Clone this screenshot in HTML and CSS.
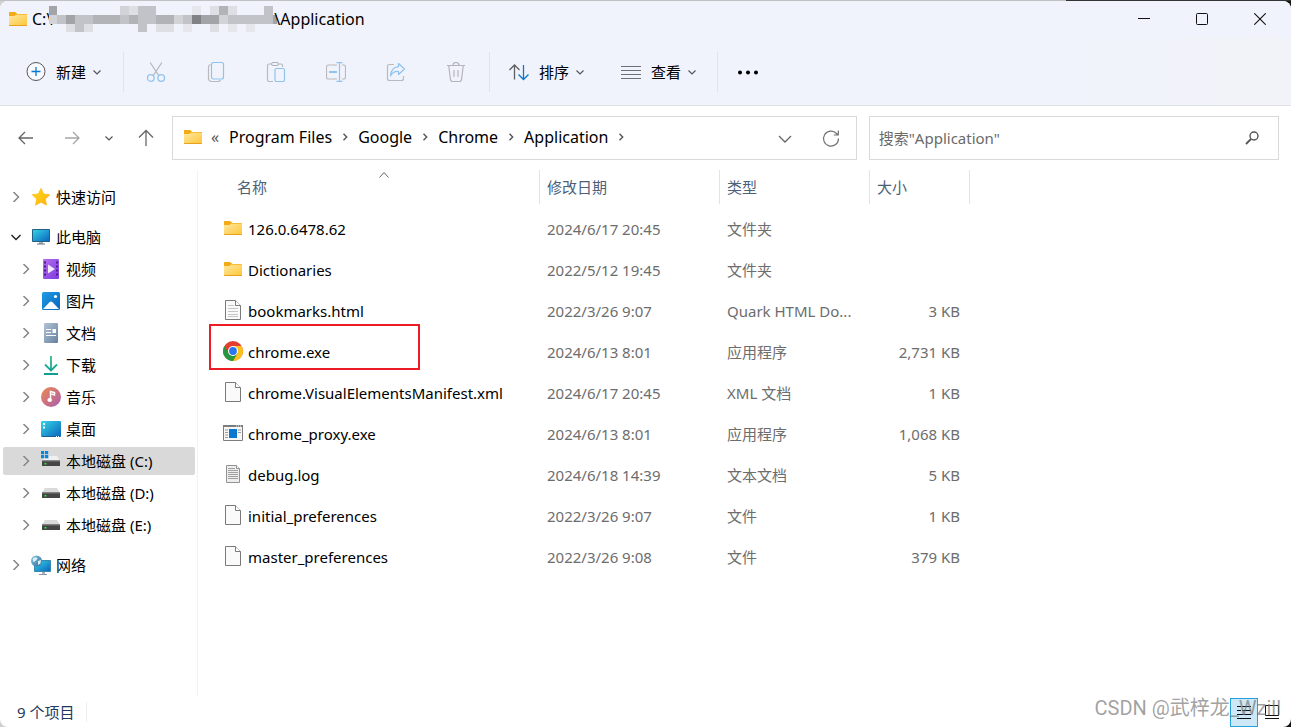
FILE: index.html
```
<!DOCTYPE html>
<html lang="zh-CN">
<head>
<meta charset="utf-8">
<title>Application</title>
<link rel="stylesheet" href="styles.css">
</head>
<body>
<svg class="defs" aria-hidden="true">
  <defs>
    <linearGradient id="g-folder" x1="0" y1="0" x2="1" y2="1"><stop offset="0" stop-color="#ffe8a0"/><stop offset="1" stop-color="#fdc63a"/></linearGradient>
    <linearGradient id="g-screen" x1="0" y1="0" x2="1" y2="1"><stop offset="0" stop-color="#35d5e6"/><stop offset="1" stop-color="#0a63bd"/></linearGradient>
    <linearGradient id="g-video" x1="0" y1="0" x2="1" y2="1"><stop offset="0" stop-color="#b66df0"/><stop offset="1" stop-color="#7d3be0"/></linearGradient>
    <linearGradient id="g-pic" x1="0" y1="0" x2="1" y2="1"><stop offset="0" stop-color="#1e9de6"/><stop offset="1" stop-color="#0b63bb"/></linearGradient>
    <linearGradient id="g-doc" x1="0" y1="0" x2="1" y2="1"><stop offset="0" stop-color="#b3c4d6"/><stop offset="1" stop-color="#66819f"/></linearGradient>
    <linearGradient id="g-music" x1="0" y1="0" x2="1" y2="1"><stop offset="0" stop-color="#f0894f"/><stop offset="1" stop-color="#a95cb0"/></linearGradient>
    <linearGradient id="g-down" x1="0" y1="0" x2="0" y2="20" gradientUnits="userSpaceOnUse"><stop offset="0" stop-color="#2fc08a"/><stop offset="1" stop-color="#0f9c94"/></linearGradient>
    <linearGradient id="g-star" x1="0" y1="0" x2="1" y2="1"><stop offset="0" stop-color="#ffd91c"/><stop offset="1" stop-color="#fdb20e"/></linearGradient>
    <linearGradient id="g-globe" x1="0" y1="0" x2="1" y2="1"><stop offset="0" stop-color="#8cc4e2"/><stop offset="1" stop-color="#2b6f9c"/></linearGradient>
    <symbol id="folder" viewBox="0 0 20 20"><path d="M1 3.500Q1 3 1.500 3H7l2 1.500V8H1z" fill="#f3ab14"/><path d="M7.500 5H18.500q.5 0 .5.5V10H1V7h5z" fill="#f5b321"/><path d="M1 7h5.500l1.500-1.200H19V16.500H1z" fill="url(#g-folder)"/><path d="M1 16h18v.6q0 .4-.5.4h-17q-.5 0-.5-.4z" fill="#e9a11c"/></symbol>
    <symbol id="page" viewBox="0 0 20 20"><path d="M2.500.5h10l5 5v14h-15z" fill="#fafafa" stroke="#7a7a7a"/><path d="M12.500.5v5h5" fill="#fff" stroke="#7a7a7a"/></symbol>
    <symbol id="textpage" viewBox="0 0 20 20"><use href="#page"/><path d="M5 5.500h6M5 8.500h10M5 11.500h10M5 14.500h10M5 16.500h10" stroke="#c6c6c6"/></symbol>
    <symbol id="log" viewBox="0 0 20 20"><path d="M3.500 1.500h10l3 3v14h-13z" fill="#eee" stroke="#929292"/><path d="M13.500 1.500v3h3" fill="#fff" stroke="#929292"/><path d="M5 4.500h7M5 6.500h10M5 8.500h10M5 10.500h10M5 12.500h10M5 14.500h10" stroke="#a0a0a0"/></symbol>
    <symbol id="chrome" viewBox="0 0 20 20"><circle cx="10" cy="10" r="10" fill="#e53d30"/><path d="M1.340 5A10 10 0 0 0 10 20L14.400 12.500 10 10 5.700 12.500z" fill="#26963f"/><path d="M10 20A10 10 0 0 0 18.660 5H10l4.400 7.500z" fill="#fcc21b"/><circle cx="10" cy="10" r="5" fill="#fff"/><circle cx="10" cy="10" r="3.900" fill="#2a76ee"/></symbol>
    <symbol id="exe" viewBox="0 0 20 20"><path d="M.5 2.500h19v15H.5z" fill="#f7f7f7" stroke="#7c7c7c"/><path d="M0 2h20v2H0z" fill="#7c7c7c"/><path d="M13 3h1M15 3h1M17 3h1" stroke="#eee"/><path d="M6 6h8v9H6z" fill="#0b78d0"/><path d="M2 7h3M2 9.500h3M2 12h3M2 14.500h3M15 7h3M15 9.500h3" stroke="#999"/></symbol>
    <symbol id="star" viewBox="0 0 20 20"><path d="m10 1.300 2.700 5.600 6.200.8-4.500 4.300 1.100 6.200-5.500-3-5.500 3L5.600 12 1.100 7.700l6.200-.8z" fill="url(#g-star)" stroke="#fcb813" stroke-width=".7" stroke-linejoin="round"/></symbol>
    <symbol id="pc" viewBox="0 0 20 20"><path d="M8 14h4v3H8z" fill="#a9b2ba"/><path d="M6 17h8" stroke="#68737d"/><path d="M1.500 2.500h17v12h-17z" fill="url(#g-screen)" stroke="#235f80"/></symbol>
    <symbol id="video" viewBox="0 0 20 20"><rect x="2" width="16" height="20" rx="1" fill="url(#g-video)"/><path d="M4 2.500v16M16 2.500v16" stroke="#482082" stroke-width="2" stroke-dasharray="2 2"/><path d="m7 5.500 7 4.500-7 4.500z" fill="#f2e9fb"/></symbol>
    <symbol id="picture" viewBox="0 0 20 20"><rect x="1" y="1" width="18" height="18" rx="1.500" fill="url(#g-pic)"/><path d="m2 18 6.700-7q1.300-1.200 2.600 0L18 18z" fill="#f7fbff"/><circle cx="14.500" cy="5.500" r="1.600" fill="#fff"/></symbol>
    <symbol id="document" viewBox="0 0 20 20"><rect x="3" y="0" width="14" height="20" rx="1" fill="url(#g-doc)"/><path d="M5 6.500h5M5 9.500h5M5 12.500h10" stroke="#fff"/><path d="M11.500 6h3.500v4h-3.500z" fill="#fff"/></symbol>
    <symbol id="download" viewBox="0 0 20 20"><path d="M10 1v14M4 9.500l6 6 6-6M3 19h14" fill="none" stroke="url(#g-down)" stroke-width="1.800"/></symbol>
    <symbol id="music" viewBox="0 0 20 20"><circle cx="10" cy="10" r="10" fill="url(#g-music)"/><path d="M9.500 13V4.500l4 1V8l-3-1" fill="none" stroke="#fff" stroke-width="1.500"/><ellipse cx="8.700" cy="13" rx="2.300" ry="2" fill="#fff"/></symbol>
    <symbol id="desktop" viewBox="0 0 20 20"><rect y="2" width="20" height="16" rx="1" fill="url(#g-screen)"/><path d="M2 4h2v2H2zM2 7.500h2v2H2z" fill="#fff"/><path d="M1 17.500h18" stroke="#1b5c92"/><path d="M15 17.500h1M17 17.500h1" stroke="#fff"/></symbol>
    <symbol id="disk" viewBox="0 0 20 20"><path d="M4 5h12l3 5H1z" fill="#d9dadc"/><path d="M1 9.500h18V15H1z" fill="#454545"/><path d="M1 9.500h18v1H1z" fill="#777"/><path d="M3.500 12h2v1.500h-2z" fill="#37e14b"/></symbol>
    <symbol id="sysdisk" viewBox="0 0 20 20"><path d="M4 5h12l3 5H1z" fill="#f0f0f0"/><path d="M1 9.500h18V15H1z" fill="#454545"/><path d="M1 9.500h18v1H1z" fill="#777"/><path d="M3.500 12h2v1.500h-2z" fill="#37e14b"/><path d="M0 0h8v7.500H0z" fill="#d9d9d9"/><path d="M0 0h3.200v3.200H0zM4 0h3.200v3.200H4zM0 4h3.200v3.200H0zM4 4h3.200v3.200H4z" fill="#0b86d8"/></symbol>
    <symbol id="network" viewBox="0 0 20 20"><path d="M11 17h3v2h-3z" fill="#a9b2ba"/><path d="M8 19.500h8" stroke="#8c98a3"/><path d="M3.500 5.500h16v11h-16z" fill="url(#g-screen)" stroke="#3a87ab"/><circle cx="5.500" cy="6" r="5.500" fill="url(#g-globe)"/><path d="M1.500 4q2-2.500 4-1.500T5 5.500 2.500 7zM7 6l3-1-.5 3.500L7 10z" fill="#d9eff8"/></symbol>
    <symbol id="chev-r" viewBox="0 0 10 10"><path d="M2.500 0 7.500 5 2.500 10" fill="none" stroke="currentColor" stroke-width="1.500"/></symbol>
    <symbol id="chev-s" viewBox="0 0 10 10"><path d="M3.500 1.800 6.700 5 3.500 8.200" fill="none" stroke="currentColor" stroke-width="1.400"/></symbol>
    <symbol id="chev-d" viewBox="0 0 10 10"><path d="M1.500 3.500 5 7l3.500-3.500" fill="none" stroke="currentColor" stroke-width="1.200"/></symbol>
  </defs>
</svg>
<div class="edge"></div>
<div class="window">
  <header class="titlebar">
    <div class="title">
      <svg class="i20" aria-hidden="true"><use href="#folder"/></svg>
      <h1 class="path"><span>C:\</span><svg class="mosaic" viewBox="0 0 228 26" aria-hidden="true" shape-rendering="crispEdges">
        <g fill="#d2d3d7"><path d="M71 0h9v9h-9zM0 9h8v9H0zM62 9h9v9h-9zM125 9h9v9h-9zM170 9h9v9h-9z"/></g>
        <g fill="#dddfe4"><path d="M80 0h9v9h-9zM161 0h9v9h-9zM179 0h9v9h-9zM17 18h9v8h-9zM35 18h9v8h-9zM107 18h18v8h-18zM161 18h9v8h-9z"/></g>
        <g fill="#e6e7ec"><path d="M143 0h9v9h-9zM134 18h9v8h-9zM179 18h9v8h-9zM197 18h9v8h-9z"/></g>
        <g fill="#c1c3c8"><path d="M89 0h18v9H89zM215 0h9v9h-9zM8 9h9v9H8zM26 9h18v9H26zM71 9h9v9h-9zM89 9h18v9H89zM134 9h9v9h-9zM179 9h45v9h-45zM26 18h9v8h-9zM89 18h9v8h-9z"/></g>
        <g fill="#b1b3b7"><path d="M170 0h9v9h-9zM44 9h27v9H44zM80 9h9v9h-9zM107 9h18v9h-18z"/></g>
        <g fill="#a3a4a8"><path d="M0 0h8v9H0zM17 9h9v9h-9zM152 9h18v9h-18zM224 9h4v9h-4z"/></g>
        <path d="M143 9h9v9h-9z" fill="#828286"/>
      </svg><span>\Application</span></h1>
    </div>
    <div class="controls">
      <button class="control" aria-label="最小化"><svg class="i12" viewBox="0 0 12 12"><path d="M0 5.500h12" stroke="#111"/></svg></button>
      <button class="control" aria-label="最大化"><svg class="i12" viewBox="0 0 12 12"><rect x=".5" y=".5" width="11" height="11" rx="1" fill="none" stroke="#111"/></svg></button>
      <button class="control" aria-label="关闭"><svg class="i12" viewBox="0 0 12 12"><path d="m.3.3 11.400 11.400M11.700.3.3 11.700" stroke="#111" stroke-width="1.100"/></svg></button>
    </div>
  </header>

  <div class="toolbar" role="toolbar">
    <button class="cmd cmd-new"><svg class="i20" viewBox="0 0 20 20" fill="none"><circle cx="10" cy="9.500" r="9" fill="#f8faff" stroke="#555"/><path d="M10 5v9M5.500 9.500h9" stroke="#0b78cf" stroke-width="1.300"/></svg><span>新建</span><svg class="i10 dim"><use href="#chev-d"/></svg></button>
    <span class="rule"></span>
    <div class="tools">
      <button class="tool" aria-label="剪切"><svg class="i20" viewBox="0 0 20 20" fill="none"><path d="M4.200.5 13 14M15.800.5 7 14" stroke="#b3b4b8" stroke-width="1.200"/><circle cx="4.800" cy="16" r="3.300" stroke="#8fc3ec" stroke-width="1.300"/><circle cx="15.200" cy="16" r="3.300" stroke="#8fc3ec" stroke-width="1.300"/></svg></button>
      <button class="tool" aria-label="复制"><svg class="i20" viewBox="0 0 20 20" fill="none"><path d="M4.500 2.500Q2.500 3 2.500 5v11q0 3.500 3.500 3.500h6q2 0 2.500-1.500" stroke="#b9babe" stroke-width="1.200"/><rect x="5.500" y=".5" width="12" height="16.500" rx="2" stroke="#8fc3ec" stroke-width="1.200"/></svg></button>
      <button class="tool" aria-label="粘贴"><svg class="i20" viewBox="0 0 20 20" fill="none"><path d="M6 2H3Q1.500 2 1.500 3.500V18q0 1.500 1.500 1.500h4M12 2h3q1.500 0 1.500 1.500V5" stroke="#b9babe" stroke-width="1.200"/><rect x="5.500" y=".5" width="7" height="3" rx="1.500" stroke="#aeb0b4"/><rect x="9" y="6.500" width="9.500" height="13" rx="1.500" stroke="#8fc3ec" stroke-width="1.200"/></svg></button>
      <button class="tool" aria-label="重命名"><svg class="i20" viewBox="0 0 20 20" fill="none"><path d="M11 3H2Q.5 3 .5 5v10q0 2 1.500 2h9M16 3h2q1.500 0 1.500 2v10q0 2-1.500 2h-2" stroke="#b9babe" stroke-width="1.200"/><path d="M10.500.6h6M10.500 19.400h6M13.500.6v18.800" stroke="#8fc3ec" stroke-width="1.200"/><path d="M3 10h8" stroke="#8fc3ec" stroke-width="2"/></svg></button>
      <button class="tool" aria-label="共享"><svg class="i20" viewBox="0 0 20 20" fill="none"><path d="M8 2.500H3.500q-2 0-2 2v12q0 2 2 2h12q2 0 2-2V14" stroke="#b9babe" stroke-width="1.200"/><path d="M12.500 1.500 18.500 7l-6 5.500V9.500Q7 9 4.500 14 5 5.500 12.500 4.700z" stroke="#8fc3ec" stroke-width="1.200" stroke-linejoin="round"/></svg></button>
      <button class="tool" aria-label="删除"><svg class="i20" viewBox="0 0 20 20" fill="none" stroke="#b3b4b8" stroke-width="1.200"><path d="M1 3.500h18M7 3.500q0-3 3-3t3 3M2.700 3.500 4.500 17.500q.2 2 2 2h7q1.800 0 2-2L17.300 3.500M8 8v7M12 8v7"/></svg></button>
    </div>
    <span class="rule"></span>
    <div class="menus">
      <button class="cmd"><svg class="i20" viewBox="0 0 20 20" fill="none"><path d="M5.500 17.500V3M.5 8l5-5 5 5" stroke="#5d5f63" stroke-width="1.300"/><path d="M14.500 3v14.500M9.500 12.500l5 5 5-5" stroke="#0b78cf" stroke-width="1.300"/></svg><span>排序</span><svg class="i10 dim"><use href="#chev-d"/></svg></button>
      <button class="cmd"><svg class="i20" viewBox="0 0 20 20"><path d="M0 4.500h20M0 8.500h20M0 12.500h20M0 16.500h20" stroke="#6d6f76"/></svg><span>查看</span><svg class="i10 dim"><use href="#chev-d"/></svg></button>
    </div>
    <span class="rule"></span>
    <button class="cmd more" aria-label="更多"><svg class="i20" viewBox="0 0 20 20"><circle cx="2" cy="10.500" r="2"/><circle cx="10" cy="10.500" r="2"/><circle cx="18" cy="10.500" r="2"/></svg></button>
  </div>

  <div class="navbar">
    <div class="history">
      <button class="nav" aria-label="后退"><svg class="i20" viewBox="0 0 20 20"><path d="M17 10H3.500M9 4l-6 6 6 6" fill="none" stroke="#666" stroke-width="1.300"/></svg></button>
      <button class="nav" aria-label="前进"><svg class="i20" viewBox="0 0 20 20"><path d="M3 10h13.500M11 4l6 6-6 6" fill="none" stroke="#a6a6a6" stroke-width="1.300"/></svg></button>
      <button class="nav nav-small" aria-label="最近的位置"><svg class="i10 dim"><use href="#chev-d"/></svg></button>
      <button class="nav" aria-label="上移"><svg class="i20" viewBox="0 0 20 20"><path d="M10 18V2.500M3 9.500l7-7 7 7" fill="none" stroke="#666" stroke-width="1.300"/></svg></button>
    </div>
    <div class="address">
      <div class="crumbs">
        <svg class="i20" aria-hidden="true"><use href="#folder"/></svg>
        <span class="overflow">«</span>
        <a href="#pf">Program Files</a><svg class="i10 dim"><use href="#chev-s"/></svg>
        <a href="#google">Google</a><svg class="i10 dim"><use href="#chev-s"/></svg>
        <a href="#chrome-dir">Chrome</a><svg class="i10 dim"><use href="#chev-s"/></svg>
        <a href="#app">Application</a><svg class="i10 dim"><use href="#chev-s"/></svg>
      </div>
      <button class="nav" aria-label="历史记录"><svg class="i20" viewBox="0 0 20 20"><path d="m4 8 6 6 6-6" fill="none" stroke="#666" stroke-width="1.300"/></svg></button>
      <button class="nav" aria-label="刷新"><svg class="i20" viewBox="0 0 20 20"><path d="M17.500 10.500A7.500 7.500 0 1 1 15.500 5.500L17 7M17.300 2.500V7H12.800" fill="none" stroke="#707070" stroke-width="1.200"/></svg></button>
    </div>
    <label class="search">
      <input type="search" placeholder="搜索&quot;Application&quot;" aria-label="搜索">
      <svg class="i20" viewBox="0 0 20 20" aria-hidden="true"><circle cx="12" cy="8" r="4" fill="none" stroke="#555" stroke-width="1.400"/><path d="m9 11-5 5" stroke="#555" stroke-width="1.800"/></svg>
    </label>
  </div>

  <div class="body">
    <nav class="tree">
      <a class="node" href="#quick"><svg class="i10 twist"><use href="#chev-r"/></svg><svg class="i20"><use href="#star"/></svg><span>快速访问</span></a>
      <div class="branch">
        <a class="node" href="#pc-node"><svg class="i10 open" viewBox="0 0 10 10"><path d="m.5 3 4.500 4.500L9.500 3" fill="none" stroke="#222" stroke-width="1.500"/></svg><svg class="i20"><use href="#pc"/></svg><span>此电脑</span></a>
        <a class="node sub" href="#v"><svg class="i10 twist"><use href="#chev-r"/></svg><svg class="i20"><use href="#video"/></svg><span>视频</span></a>
        <a class="node sub" href="#p"><svg class="i10 twist"><use href="#chev-r"/></svg><svg class="i20"><use href="#picture"/></svg><span>图片</span></a>
        <a class="node sub" href="#d"><svg class="i10 twist"><use href="#chev-r"/></svg><svg class="i20"><use href="#document"/></svg><span>文档</span></a>
        <a class="node sub" href="#dl"><svg class="i10 twist"><use href="#chev-r"/></svg><svg class="i20"><use href="#download"/></svg><span>下载</span></a>
        <a class="node sub" href="#m"><svg class="i10 twist"><use href="#chev-r"/></svg><svg class="i20"><use href="#music"/></svg><span>音乐</span></a>
        <a class="node sub" href="#desk"><svg class="i10 twist"><use href="#chev-r"/></svg><svg class="i20"><use href="#desktop"/></svg><span>桌面</span></a>
        <a class="node sub selected" href="#c" aria-current="true"><svg class="i10 twist"><use href="#chev-r"/></svg><svg class="i20"><use href="#sysdisk"/></svg><span>本地磁盘 (C:)</span></a>
        <a class="node sub" href="#dd"><svg class="i10 twist"><use href="#chev-r"/></svg><svg class="i20"><use href="#disk"/></svg><span>本地磁盘 (D:)</span></a>
        <a class="node sub" href="#e"><svg class="i10 twist"><use href="#chev-r"/></svg><svg class="i20"><use href="#disk"/></svg><span>本地磁盘 (E:)</span></a>
      </div>
      <a class="node" href="#net"><svg class="i10 twist"><use href="#chev-r"/></svg><svg class="i20"><use href="#network"/></svg><span>网络</span></a>
    </nav>

    <main class="files">
      <table>
        <colgroup><col class="c-name"><col class="c-date"><col class="c-type"><col class="c-size"></colgroup>
        <thead>
          <tr><th><div class="head head-name">名称<svg class="sort" viewBox="0 0 10 6"><path d="m.5 5.500 4.500-5 4.500 5" fill="none" stroke="#666"/></svg></div></th><th><div class="head">修改日期</div></th><th><div class="head">类型</div></th><th><div class="head">大小</div></th></tr>
        </thead>
        <tbody>
          <tr><td><div class="name"><svg class="i20"><use href="#folder"/></svg>126.0.6478.62</div></td><td>2024/6/17 20:45</td><td>文件夹</td><td></td></tr>
          <tr><td><div class="name"><svg class="i20"><use href="#folder"/></svg>Dictionaries</div></td><td>2022/5/12 19:45</td><td>文件夹</td><td></td></tr>
          <tr><td><div class="name"><svg class="i20"><use href="#textpage"/></svg>bookmarks.html</div></td><td>2022/3/26 9:07</td><td>Quark HTML Do...</td><td>3 KB</td></tr>
          <tr><td><div class="name marked"><svg class="i20"><use href="#chrome"/></svg>chrome.exe</div></td><td>2024/6/13 8:01</td><td>应用程序</td><td>2,731 KB</td></tr>
          <tr><td><div class="name"><svg class="i20"><use href="#page"/></svg>chrome.VisualElementsManifest.xml</div></td><td>2024/6/17 20:45</td><td>XML 文档</td><td>1 KB</td></tr>
          <tr><td><div class="name"><svg class="i20"><use href="#exe"/></svg>chrome_proxy.exe</div></td><td>2024/6/13 8:01</td><td>应用程序</td><td>1,068 KB</td></tr>
          <tr><td><div class="name"><svg class="i20"><use href="#log"/></svg>debug.log</div></td><td>2024/6/18 14:39</td><td>文本文档</td><td>5 KB</td></tr>
          <tr><td><div class="name"><svg class="i20"><use href="#page"/></svg>initial_preferences</div></td><td>2022/3/26 9:07</td><td>文件</td><td>1 KB</td></tr>
          <tr><td><div class="name"><svg class="i20"><use href="#page"/></svg>master_preferences</div></td><td>2022/3/26 9:08</td><td>文件</td><td>379 KB</td></tr>
        </tbody>
      </table>
    </main>
  </div>

  <footer class="status">
    <span class="count">9 个项目</span>
    <div class="views">
      <button class="view active" aria-label="详细信息"><svg class="i16" viewBox="0 0 16 16"><path d="M1 2.500h4M6 2.500h9M1 6.500h4M6 6.500h9M1 10.500h14M1 14.500h14" stroke="#111"/></svg></button>
      <button class="view" aria-label="大图标"><svg class="i16" viewBox="0 0 16 16"><path d="M1.500 1.500h13v10h-13zM1 14.500h14" fill="none" stroke="#111"/></svg></button>
    </div>
  </footer>
  <div class="watermark">CSDN @武梓龙_Wzill</div>
</div>
</body>
</html>
```
FILE: styles.css
```
*, *::before { box-sizing: border-box; }

body {
  margin: 0;
  height: 100vh;
  display: flex;
  flex-direction: column;
  overflow: hidden;
  background: linear-gradient(90deg, #d0d0d0 50%, #101510 50%);
  color: #000;
  font: 15px/20px "Noto Sans", "Noto Sans CJK SC", sans-serif;
}

button {
  display: flex;
  align-items: center;
  justify-content: center;
  padding: 0;
  border: 0;
  background: none;
  color: inherit;
  font: inherit;
}

a { color: inherit; text-decoration: none; }
svg { flex: none; display: block; }

.defs { position: absolute; width: 0; height: 0; }
.i10 { width: 10px; height: 10px; }
.i12 { width: 12px; height: 12px; }
.i16 { width: 16px; height: 16px; }
.i20 { width: 20px; height: 20px; }
.dim { color: #555; }

.edge {
  height: 1px;
  flex: none;
  background: linear-gradient(90deg, #c0c1c5 82.6%, #333 82.6%);
}

.window {
  position: relative;
  flex: 1;
  min-height: 0;
  display: flex;
  flex-direction: column;
  overflow: hidden;
  border-radius: 8px;
  background: #fff;
}

/* Title bar */
.titlebar {
  display: flex;
  justify-content: space-between;
  height: 37px;
  padding: 0 2px 2px 8px;
  background: #f0f3fb;
}
.title, .path, .controls { display: flex; align-items: center; }
.title { gap: 4px; }
.path { margin: 0; font-size: 16px; font-weight: 400; line-height: 20px; }
.mosaic { width: 228px; height: 26px; margin: 0 -3px; }
.control { width: 58px; height: 35px; }

/* Command bar */
.toolbar {
  display: flex;
  align-items: center;
  height: 68px;
  padding-left: 26px;
  border-bottom: 1px solid #dfe1e5;
  background: linear-gradient(90deg, #f0f3fb 80%, #f1f3f8);
}
.cmd { gap: 10px; height: 40px; }
.cmd .i10 { margin-left: -4px; }
.cmd-new { margin-right: 21px; }
.rule { width: 1px; height: 40px; background: #e0e3ea; }
.tools { display: flex; margin: 0 3px 0 2px; }
.tool { width: 60px; height: 40px; }
.menus { display: flex; gap: 36px; margin: 0 20px 0 19px; }
.more { margin-left: 20px; }

/* Navigation row */
.navbar {
  display: flex;
  align-items: center;
  height: 64px;
  padding: 0 12px 0 3px;
}
.history { display: flex; margin-right: 3px; }
.nav { width: 46px; height: 40px; }
.nav-small { width: 28px; }
.address, .search {
  display: flex;
  align-items: center;
  height: 44px;
  border: 1px solid #d9d9d9;
  background: #fff;
}
.address { flex: 7 1 0; padding: 0 2px 0 10px; margin-right: 12px; }
.crumbs { flex: 1; display: flex; align-items: center; gap: 8px; padding-bottom: 2px; font-size: 16px; }
.overflow { width: 10px; color: #555; }
.search { flex: 4 1 0; padding: 0 16px 0 9px; }
.search input {
  flex: 1;
  min-width: 0;
  padding: 0;
  border: 0;
  outline: 0;
  background: none;
  font: inherit;
}
.search input::placeholder { color: #6a6a6a; opacity: 1; }

/* Body */
.body { flex: 1; min-height: 0; display: flex; }
.tree {
  flex: none;
  width: 198px;
  display: flex;
  flex-direction: column;
  gap: 12px;
  padding: 13px 2px 0 3px;
  border-right: 1px solid #f3f3f3;
}
.branch { display: flex; flex-direction: column; gap: 4px; }
.node {
  display: flex;
  align-items: center;
  height: 28px;
  padding-left: 8px;
  border-radius: 2px;
  white-space: nowrap;
}
.node .i20 { margin: 0 5px 0 10px; }
.sub { padding-left: 18px; }
.selected { background: #d9d9d9; }
.twist { color: #858585; }

/* File list */
.files { flex: 1; min-width: 0; }
table { width: 772px; table-layout: fixed; border-collapse: collapse; }
.c-name { width: 342px; }
.c-date { width: 180px; }
.c-type { width: 150px; }
.c-size { width: 100px; }
th { height: 38px; padding: 0; vertical-align: top; text-align: left; font-weight: 400; color: #4c607a; }
.head {
  position: relative;
  height: 34px;
  padding: 7px 0 0 7px;
  border-right: 1px solid #e3e3e3;
}
.head-name { padding-left: 39px; }
.sort { position: absolute; top: 2px; left: 181px; width: 10px; height: 6px; }
td {
  height: 41px;
  padding: 0 10px 0 7px;
  color: #6d6d6d;
  white-space: nowrap;
}
td:first-child { padding: 0 0 0 25px; color: #000; }
td:last-child { text-align: right; }
.name { position: relative; display: flex; align-items: center; gap: 5px; }
.name .i20 { margin-bottom: 2px; }
.marked::before {
  content: "";
  position: absolute;
  top: -17px;
  left: -14px;
  width: 211px;
  height: 46px;
  border: 2px solid #ed1c24;
}

/* Status bar */
.status {
  display: flex;
  align-items: center;
  justify-content: space-between;
  height: 30px;
  padding: 0 5px 0 17px;
}
.count { padding-right: 12px; border-right: 1px solid #eee; color: #1e395b; }
.views { display: flex; }
.view { width: 28px; height: 29px; }
.active { border: 1px solid #26a0da; background: #cce8f6; }

.watermark {
  position: absolute;
  right: 10px;
  bottom: 6px;
  font: 20px/26px Roboto, "Noto Sans CJK SC", sans-serif;
  color: rgba(120, 120, 120, .7);
}
```
